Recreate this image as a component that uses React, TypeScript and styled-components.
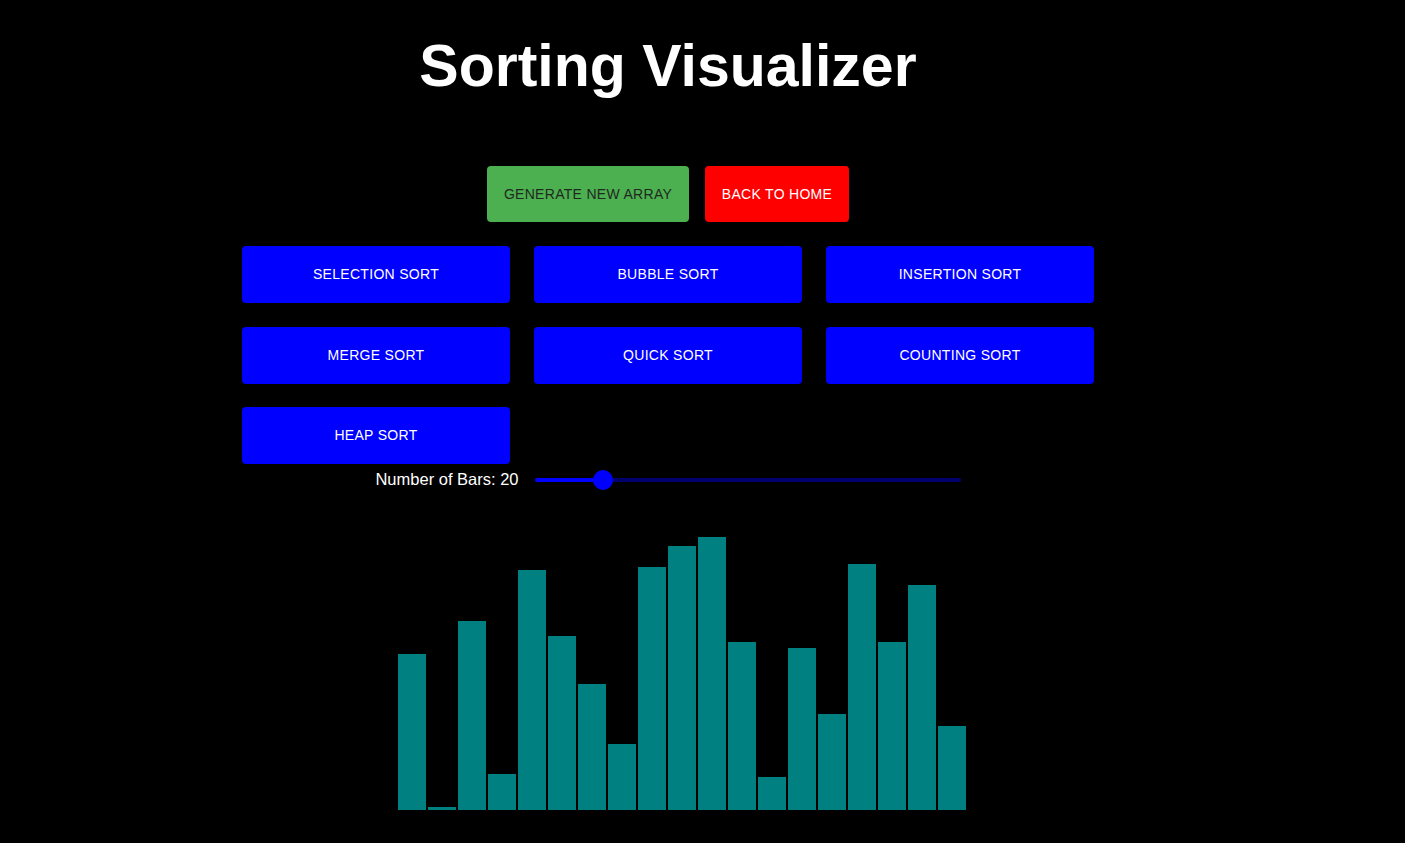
import React, { useState } from "react";
import styled, { createGlobalStyle } from "styled-components";

const Global = createGlobalStyle`
  html, body { margin: 0; padding: 0; background: #000; }
  body { font-family: "Liberation Sans", Arial, sans-serif; color: #fff; }
`;

const Page = styled.div`
  width: 1336px;
  display: flex;
  flex-direction: column;
  align-items: center;
`;

const Title = styled.h1`
  margin: 32px 0 0;
  font-size: 59px;
  line-height: 68px;
  font-weight: 700;
  color: #fff;
`;

const TopRow = styled.div`
  margin-top: 66px;
  display: flex;
  gap: 16px;
`;

const Button = styled.button<{ $bg: string; $fg: string; $w: number }>`
  width: ${(p) => p.$w}px;
  height: 56px;
  border: none;
  border-radius: 4px;
  background: ${(p) => p.$bg};
  color: ${(p) => p.$fg};
  font-family: "Liberation Sans", Arial, sans-serif;
  font-size: 14px;
  letter-spacing: 0.3px;
  text-transform: uppercase;
  cursor: pointer;
  padding: 0 0 1px;
`;

const SortGrid = styled.div`
  margin-top: 24px;
  display: grid;
  grid-template-columns: repeat(3, 268px);
  grid-auto-rows: 57px;
  column-gap: 24px;
  row-gap: 23.5px;
`;

const SliderRow = styled.div`
  height: 31px;
  display: flex;
  align-items: center;
  gap: 16px;
`;

const Label = styled.span`
  font-size: 16.5px;
  color: #fff;
`;

const Range = styled.input<{ $pct: number }>`
  -webkit-appearance: none;
  appearance: none;
  width: 426px;
  height: 4px;
  margin: 0;
  border-radius: 2px;
  background: linear-gradient(
    to right,
    #0000ff 0%,
    #0000ff ${(p) => p.$pct}%,
    #00006e ${(p) => p.$pct}%,
    #00006e 100%
  );
  outline: none;
  &::-webkit-slider-thumb {
    -webkit-appearance: none;
    appearance: none;
    width: 20px;
    height: 20px;
    border-radius: 50%;
    background: #0000ff;
    border: none;
    cursor: pointer;
  }
`;

const Bars = styled.div`
  align-self: flex-start;
  margin-left: 398px;
  margin-top: 15px;
  height: 300px;
  display: flex;
  align-items: flex-end;
  gap: 2px;
`;

const Bar = styled.div`
  width: 28px;
  background: #008080;
`;

const heights = [156, 3, 189, 36, 240, 174, 126, 66, 243, 264, 273, 168, 33, 162, 96, 246, 168, 225, 84, 0];

const sorts = [
  "Selection Sort",
  "Bubble Sort",
  "Insertion Sort",
  "Merge Sort",
  "Quick Sort",
  "Counting Sort",
  "Heap Sort",
];

export default function App() {
  const [n, setN] = useState(20);
  const min = 5;
  const max = 110;
  const pct = ((n - min) / (max - min)) * 100;
  return (
    <Page>
      <Global />
      <Title>Sorting Visualizer</Title>
      <TopRow>
        <Button $bg="#4caf50" $fg="#1f2a1f" $w={202}>Generate New Array</Button>
        <Button $bg="#ff0000" $fg="#ffffff" $w={144}>Back to Home</Button>
      </TopRow>
      <SortGrid>
        {sorts.map((s) => (
          <Button key={s} $bg="#0000ff" $fg="#ffffff" $w={268} style={{ height: "100%" }}>
            {s}
          </Button>
        ))}
      </SortGrid>
      <SliderRow>
        <Label>Number of Bars: {n}</Label>
        <Range
          type="range"
          min={min}
          max={max}
          value={n}
          $pct={pct}
          onChange={(e) => setN(Number(e.target.value))}
        />
      </SliderRow>
      <Bars>
        {heights.map((h, i) => (
          <Bar key={i} style={{ height: `${h}px` }} />
        ))}
      </Bars>
    </Page>
  );
}
